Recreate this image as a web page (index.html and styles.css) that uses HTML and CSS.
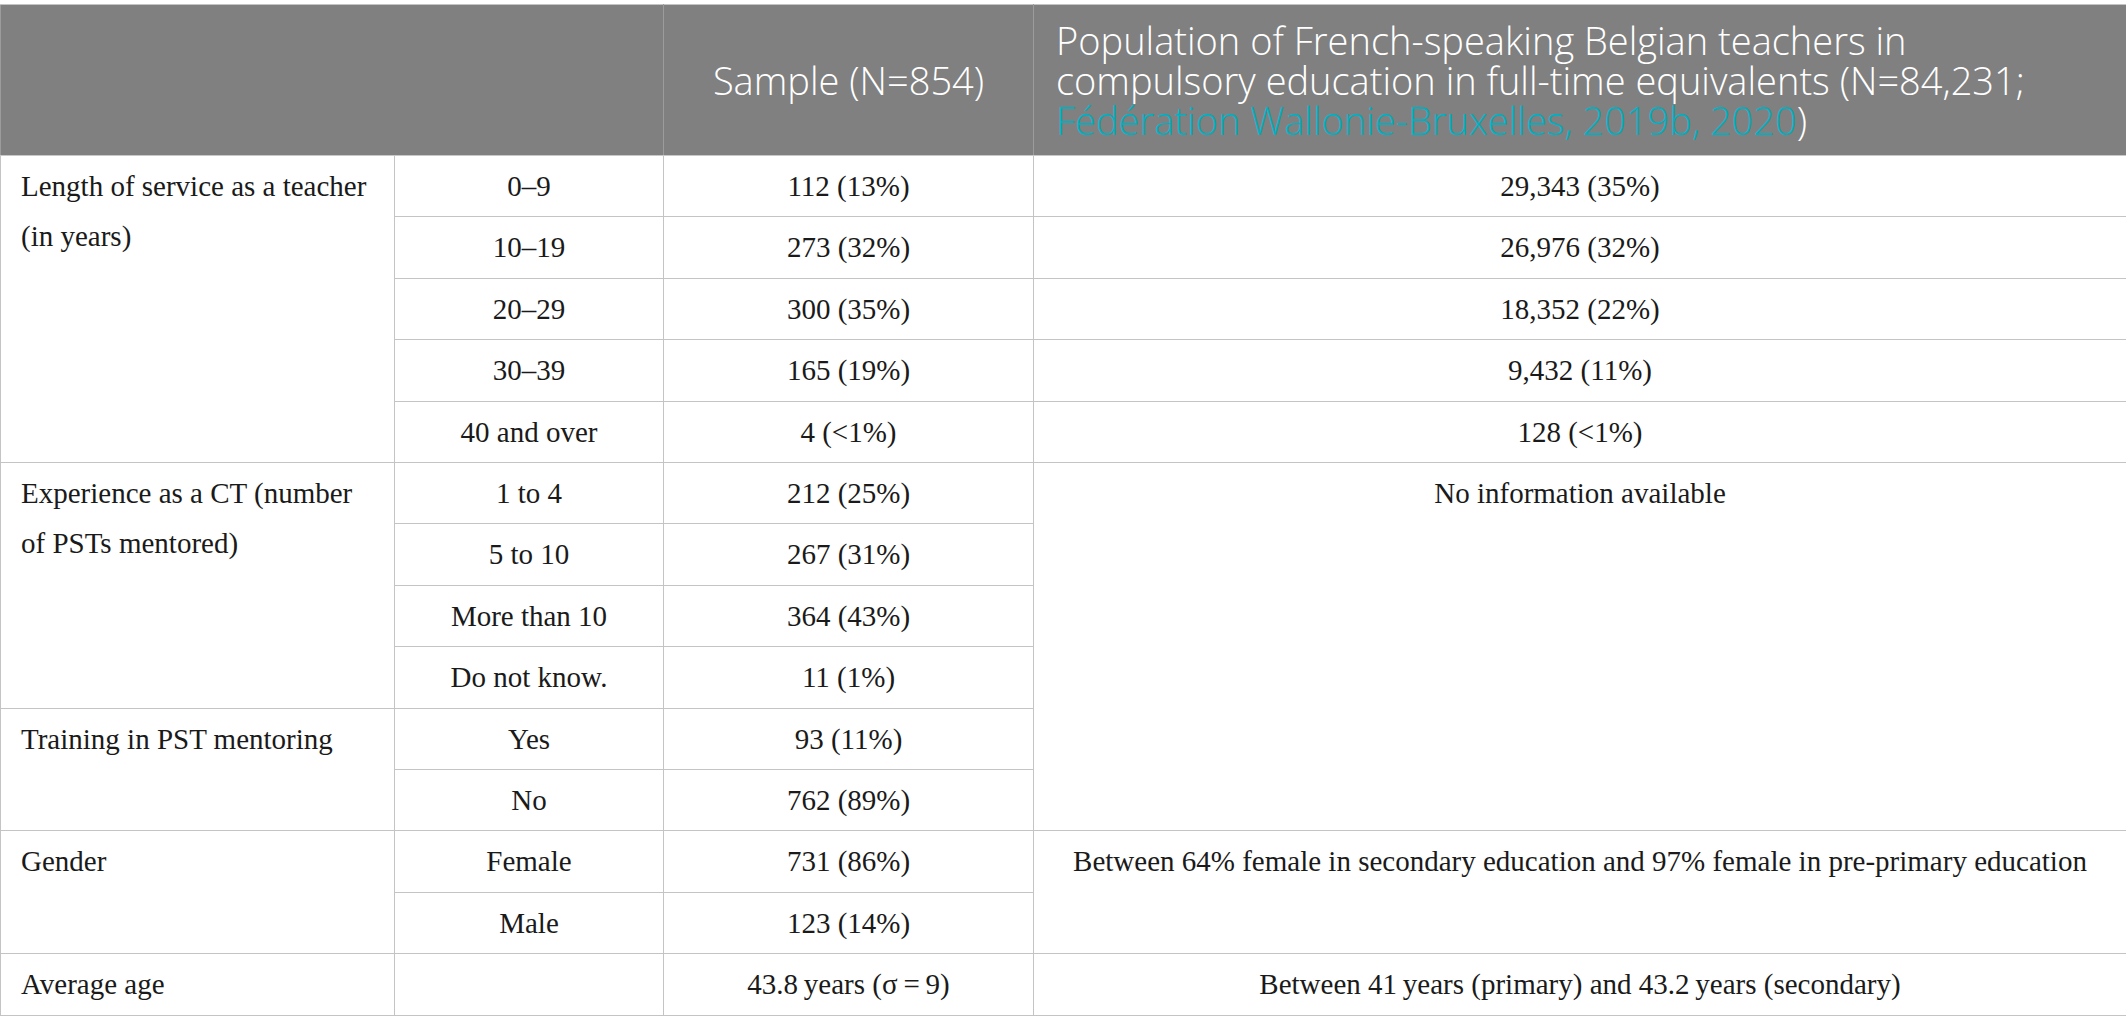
FILE: index.html
```html
<!DOCTYPE html>
<html lang="en">
<head>
	<meta charset="utf-8">
	<title>Sample and population characteristics</title>
	<meta name="viewport" content="width=device-width, initial-scale=1">
	<link rel="stylesheet" href="styles.css">
</head>
<body>

<!-- Table: sample vs population -->
<div class="page">
<table class="data">
  <colgroup>
    <col class="c-label">
    <col class="c-cat">
    <col class="c-sample">
    <col class="c-pop">
  </colgroup>
  <thead>
    <tr>
      <th colspan="2"></th>
      <th class="center">Sample (N=854)</th>
      <th class="left">Population of French-speaking Belgian teachers in<br>compulsory education in full-time equivalents (N=84,231;<br><a class="ref" href="#">Fédération Wallonie-Bruxelles, 2019b, 2020</a>)</th>
    </tr>
  </thead>
  <tbody>
    <tr>
      <td class="label" rowspan="5">Length of service as a teacher (in years)</td>
      <td>0–9</td>
      <td>112 (13%)</td>
      <td>29,343 (35%)</td>
    </tr>
    <tr>
      <td>10–19</td>
      <td>273 (32%)</td>
      <td>26,976 (32%)</td>
    </tr>
    <tr>
      <td>20–29</td>
      <td>300 (35%)</td>
      <td>18,352 (22%)</td>
    </tr>
    <tr>
      <td>30–39</td>
      <td>165 (19%)</td>
      <td>9,432 (11%)</td>
    </tr>
    <tr>
      <td>40 and over</td>
      <td>4 (&lt;1%)</td>
      <td>128 (&lt;1%)</td>
    </tr>

    <tr>
      <td class="label" rowspan="4">Experience as a CT (number of PSTs mentored)</td>
      <td>1 to 4</td>
      <td>212 (25%)</td>
      <td rowspan="6">No information available</td>
    </tr>
    <tr>
      <td>5 to 10</td>
      <td>267 (31%)</td>
    </tr>
    <tr>
      <td>More than 10</td>
      <td>364 (43%)</td>
    </tr>
    <tr>
      <td>Do not know.</td>
      <td>11 (1%)</td>
    </tr>

    <tr>
      <td class="label" rowspan="2">Training in PST mentoring</td>
      <td>Yes</td>
      <td>93 (11%)</td>
    </tr>
    <tr>
      <td>No</td>
      <td>762 (89%)</td>
    </tr>

    <tr>
      <td class="label" rowspan="2">Gender</td>
      <td>Female</td>
      <td>731 (86%)</td>
      <td rowspan="2">Between 64% female in secondary education and 97% female in pre-primary education</td>
    </tr>
    <tr>
      <td>Male</td>
      <td>123 (14%)</td>
    </tr>

    <tr>
      <td class="label">Average age</td>
      <td></td>
      <td>43.8&thinsp;years (σ&thinsp;=&thinsp;9)</td>
      <td>Between 41&thinsp;years (primary) and 43.2&thinsp;years (secondary)</td>
    </tr>
  </tbody>
</table>
</div>

</body>
</html>
```

FILE: styles.css
```css
body {
  margin: 0;
  background: #fff;
  font-family: "Liberation Serif", "Times New Roman", serif;
}

.page {
  padding-top: 4px;
}

.data {
  width: 2126px;
  table-layout: fixed;
  border-collapse: collapse;
  border: 1px solid #c4c4c4;
}

.c-label  { width: 394px; }
.c-cat    { width: 269px; }
.c-sample { width: 370px; }
.c-pop    { width: 1093px; }

.data th {
  background-color: #808080;
  color: #fff;
  font-family: "Open Sans", "Noto Sans", sans-serif;
  font-weight: 300;
  font-size: 38px;
  line-height: 40px;
  padding: 15px 22px;
  vertical-align: middle;
  border: 1px solid #9c9c9c;
  border-top-color: #c4c4c4;
  border-bottom-color: #c8c8c8;
}

.data th.center { text-align: center; }
.data th.left   { text-align: left; }

.ref {
  color: #00b0c2;
  text-decoration: none;
}

.data td {
  color: #1a1a1a;
  font-size: 29px;
  line-height: 50.4px;
  padding: 5px 20px;
  text-align: center;
  vertical-align: top;
  border: 1px solid #c4c4c4;
}

.data td.label {
  text-align: left;
}
```
